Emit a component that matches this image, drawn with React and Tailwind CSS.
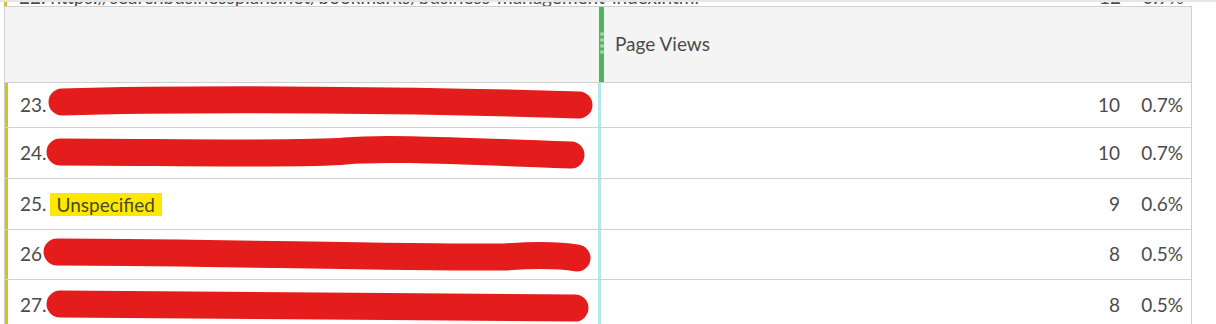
import React from 'react';

// rows of the report table; scribble = red redaction stroke drawn over the label
const rows = [
  {
    n: '23.',
    value: '10',
    pct: '0.7%',
    h: 'h-[45px]',
    scribble: 'M 57 19 C 200 15, 420 17, 574 22',
  },
  {
    n: '24.',
    value: '10',
    pct: '0.7%',
    h: 'h-[51px]',
    scribble: 'M 55 24 C 150 24, 300 27, 340 23 C 370 20, 410 21, 566 27',
  },
  { n: '25.', value: '9', pct: '0.6%', h: 'h-[51px]', label: 'Unspecified' },
  {
    n: '26',
    value: '8',
    pct: '0.5%',
    h: 'h-[50px]',
    scribble: 'M 52 22 C 200 22, 400 28, 500 27 C 540 24, 560 26, 572 28',
  },
  {
    n: '27.',
    value: '8',
    pct: '0.5%',
    h: 'h-[51px]',
    scribble: 'M 55 24 C 200 24, 400 27, 570 28',
  },
];

const Scribble = ({ d }) => (
  <svg
    className="absolute left-0 top-0 overflow-visible pointer-events-none"
    width="600"
    height="51"
    viewBox="0 0 600 51"
  >
    <path d={d} fill="none" stroke="#e41c1c" strokeWidth="27" strokeLinecap="round" />
  </svg>
);

const Row = ({ row }) => (
  <div className={`relative flex ${row.h} border-b border-[#d0d0d0]`}>
    <div className="w-[3px] bg-[#d9c022]" />
    <div className="w-[590px] flex items-center pl-[12px] text-[19px] text-[#4b4b4b]">
      <span>{row.n}</span>
      {row.label && (
        <span className="ml-[3px] px-[7px] bg-[#ffe800] text-[#4a4a20] leading-[23px]">
          {row.label}
        </span>
      )}
    </div>
    <div className="w-[3px] bg-[#b3e7ec]" />
    <div className="flex-1 flex items-center justify-end pr-[8px] text-[19px] text-[#4b4b4b]">
      <span className="mr-[11px]">{row.value}</span>
      <span className="w-[52px] text-right">{row.pct}</span>
    </div>
    {row.scribble && <Scribble d={row.scribble} />}
  </div>
);

export default function App() {
  return (
    <div className="w-[1216px] h-[324px] overflow-hidden bg-white font-['Lato',sans-serif]">
      <div className="h-[2px] bg-[#e6e6e6]" />
      <div className="ml-[4px] w-[1188px] h-[4px] flex overflow-hidden">
        <div className="w-[3px] bg-[#d9c022]" />
        <div className="w-[590px] pl-[12px] text-[19px] leading-[19px] text-[#4b4b4b] -mt-[15px] whitespace-nowrap">
          22. https://searchbusinessplans.net/bookmarks/business-management-index.html
        </div>
        <div className="w-[3px]" />
        <div className="flex-1 flex justify-end pr-[8px] text-[19px] leading-[19px] text-[#4b4b4b] -mt-[15px]">
          <span className="mr-[11px]">12</span>
          <span className="w-[52px] text-right">0.9%</span>
        </div>
      </div>
      <div className="ml-[4px] w-[1188px] border-l border-r border-[#cfcfcf]">
        <div className="flex h-[77px] bg-[#f4f4f4] border-t border-b border-[#cfcfcf]">
          <div className="w-[594px]" />
          <div className="w-[5px] bg-[#4cb55b] flex flex-col items-center justify-center gap-[2px] pb-[3px]">
            {[0, 1, 2, 3].map((i) => (
              <div key={i} className="w-[4px] h-[4px] rounded-full bg-[#9ad9a3]" />
            ))}
          </div>
          <div className="flex items-center pl-[11px] text-[19px] text-[#4b4b4b]">Page Views</div>
        </div>
        {rows.map((row) => (
          <Row key={row.n} row={row} />
        ))}
      </div>
    </div>
  );
}
